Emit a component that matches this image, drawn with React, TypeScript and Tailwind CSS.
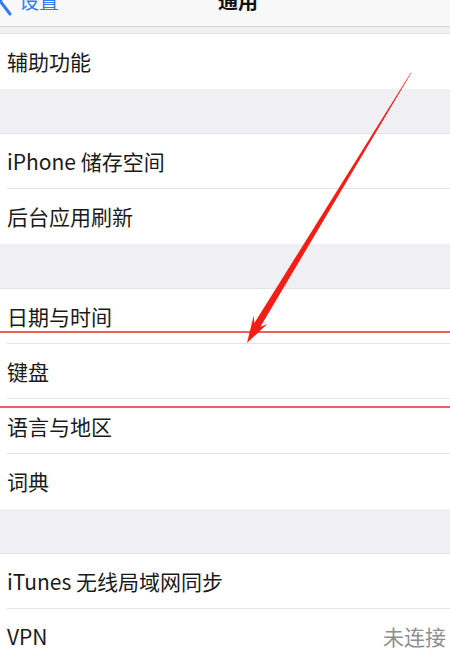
import React from "react";

const font = { fontFamily: '"Noto Sans CJK SC", "Noto Sans", sans-serif' };

function Row({ label, value, last }: { label: string; value?: string; last?: boolean }) {
  return (
    <div className="flex h-[55px] flex-col bg-white pl-[7px]">
      <div className="flex flex-1 items-center pr-[4px]">
        <span className="text-[21px] leading-none text-[#1a1a1a]">{label}</span>
        {value && <span className="ml-auto text-[21px] leading-none text-[#8e8e93]">{value}</span>}
      </div>
      <div className={last ? "h-px" : "h-px bg-[#e3e3e6]"} />
    </div>
  );
}

function Gap({ h }: { h: string }) {
  return <div className={`${h} border-b border-[#e2e2e6] bg-[#efeff4]`} />;
}

export default function App() {
  return (
    <div className="relative h-[650px] w-[450px] overflow-hidden bg-[#efeff4]" style={font}>
      {/* nav bar */}
      <div className="h-[27px] overflow-hidden border-b border-[#d4d4d8] bg-[#f8f8f8]">
        <div className="-mt-[14px] grid grid-cols-3 items-center">
          <div className="flex items-center">
            <svg width="16" height="30" viewBox="0 0 16 30" className="-ml-[3px]">
              <path d="M13 2 L3 15 L13 28" fill="none" stroke="#2f7cf6" strokeWidth="3" strokeLinecap="round" strokeLinejoin="round" />
            </svg>
            <span className="ml-[6px] text-[20px] leading-none text-[#2f7cf6]">设置</span>
          </div>
          <div className="flex justify-center pl-[26px]">
            <span className="text-[20px] font-semibold leading-none text-[#111]">通用</span>
          </div>
          <div />
        </div>
      </div>
      <Gap h="h-[7px]" />
      <Row label="辅助功能" last />
      <Gap h="h-[45px]" />
      <Row label="iPhone 储存空间" />
      <Row label="后台应用刷新" last />
      <Gap h="h-[45px]" />
      <Row label="日期与时间" />
      <Row label="键盘" />
      <Row label="语言与地区" />
      <Row label="词典" last />
      <Gap h="h-[45px]" />
      <Row label="iTunes 无线局域网同步" />
      <Row label="VPN" value="未连接" last />

      {/* red highlight lines */}
      <div className="absolute left-0 right-0 top-[331px] h-[2px] bg-[#ef5f5a]" />
      <div className="absolute left-0 right-0 top-[406px] h-[2px] bg-[#ef5f5a]" />

      {/* red arrow */}
      <svg className="absolute left-0 top-0" width="450" height="650" viewBox="0 0 450 650">
        <polygon
          points="411.5,72.5 260.4,326.7 267.3,324 247,343 253.7,315.6 254.4,323.1 410.6,72.9"
          fill="#f51d15"
        />
      </svg>
    </div>
  );
}
